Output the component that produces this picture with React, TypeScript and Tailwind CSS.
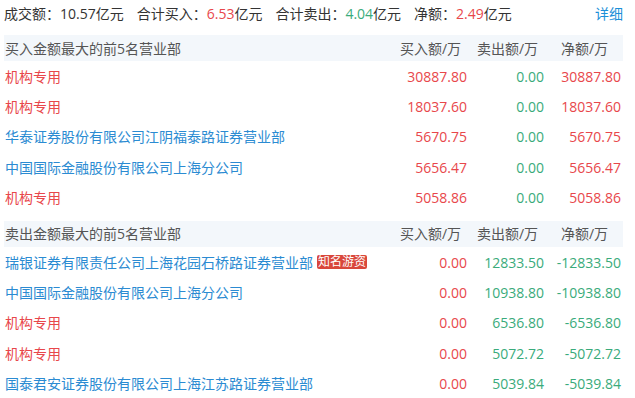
import React from "react";

type Row = { name: string; inst?: boolean; tag?: string; buy: string; sell: string; net: string };

const buyRows: Row[] = [
  { name: "机构专用", inst: true, buy: "30887.80", sell: "0.00", net: "30887.80" },
  { name: "机构专用", inst: true, buy: "18037.60", sell: "0.00", net: "18037.60" },
  { name: "华泰证券股份有限公司江阴福泰路证券营业部", buy: "5670.75", sell: "0.00", net: "5670.75" },
  { name: "中国国际金融股份有限公司上海分公司", buy: "5656.47", sell: "0.00", net: "5656.47" },
  { name: "机构专用", inst: true, buy: "5058.86", sell: "0.00", net: "5058.86" },
];

const sellRows: Row[] = [
  { name: "瑞银证券有限责任公司上海花园石桥路证券营业部", tag: "知名游资", buy: "0.00", sell: "12833.50", net: "-12833.50" },
  { name: "中国国际金融股份有限公司上海分公司", buy: "0.00", sell: "10938.80", net: "-10938.80" },
  { name: "机构专用", inst: true, buy: "0.00", sell: "6536.80", net: "-6536.80" },
  { name: "机构专用", inst: true, buy: "0.00", sell: "5072.72", net: "-5072.72" },
  { name: "国泰君安证券股份有限公司上海江苏路证券营业部", buy: "0.00", sell: "5039.84", net: "-5039.84" },
];

const RED = "text-[#e8474b]";
const GREEN = "text-[#3aab7b]";

function Section({ title, rows }: { title: string; rows: Row[] }) {
  return (
    <div>
      {/* Section header */}
      <div className="flex items-center h-[26px] bg-[#f3f7fb] text-[#555] pl-[1px]">
        <div className="flex-1">{title}</div>
        <div className="w-[77px] text-center">买入额/万</div>
        <div className="w-[77px] text-center">卖出额/万</div>
        <div className="w-[77px] text-center">净额/万</div>
      </div>
      {rows.map((r, i) => (
        <div key={i} className="flex items-center h-[30.4px]">
          <div className="flex-1 flex items-center pl-[1px]">
            <span className={r.inst ? RED : "text-[#2b8bd2]"}>{r.name}</span>
            {r.tag && (
              <span className="ml-[4px] px-[1px] h-[14px] leading-[14px] text-[12px] text-white bg-[#d9473b] rounded-[2px]">
                {r.tag}
              </span>
            )}
          </div>
          <div className={`w-[77px] text-right pr-[2px] ${RED}`}>{r.buy}</div>
          <div className={`w-[77px] text-right pr-[2px] ${GREEN}`}>{r.sell}</div>
          <div className={`w-[77px] text-right pr-[2px] ${r.net.startsWith("-") ? GREEN : RED}`}>{r.net}</div>
        </div>
      ))}
    </div>
  );
}

export default function App() {
  return (
    <div
      className="w-[635px] h-[398px] bg-white pl-[4px] pr-[12px] text-[14px] text-[#333] overflow-hidden"
      style={{ fontFamily: '"Open Sans", "Noto Sans CJK SC", sans-serif' }}
    >
      {/* Summary bar */}
      <div className="flex items-center h-[26px]">
        <span className="mr-[13px]">成交额：10.57亿元</span>
        <span className="mr-[13px]">
          合计买入：<span className={RED}>6.53</span>亿元
        </span>
        <span className="mr-[13px]">
          合计卖出：<span className={GREEN}>4.04</span>亿元
        </span>
        <span>
          净额：<span className={RED}>2.49</span>亿元
        </span>
        <span className="ml-auto text-[#1b8fd8]">详细</span>
      </div>
      <div className="mt-[9px]">
        <Section title="买入金额最大的前5名营业部" rows={buyRows} />
      </div>
      <div className="mt-[8px]">
        <Section title="卖出金额最大的前5名营业部" rows={sellRows} />
      </div>
    </div>
  );
}
